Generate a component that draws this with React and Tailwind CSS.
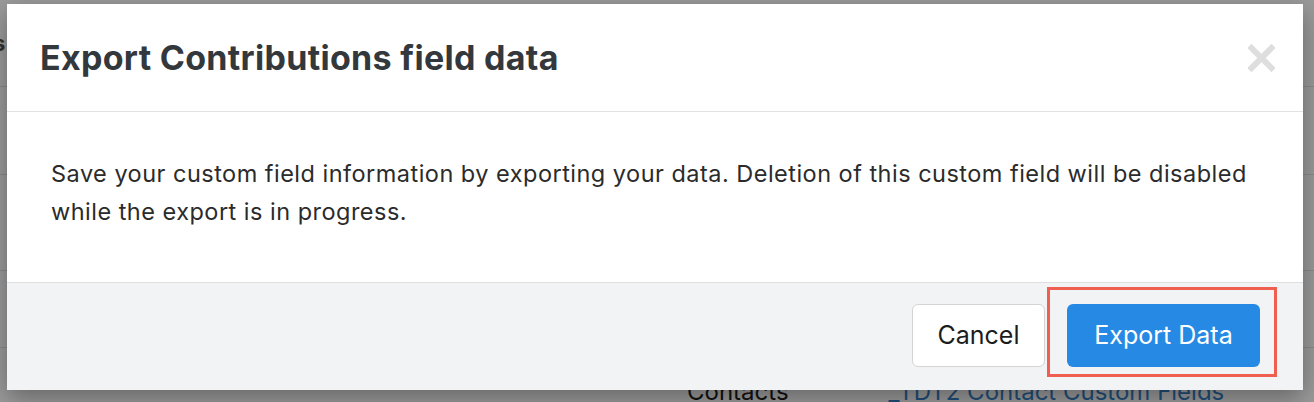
export default function App() {
  return (
    <div
      className="relative w-[1314px] h-[402px] overflow-hidden bg-[#9b9b9b]"
      style={{ fontFamily: 'Inter, "Noto Sans", sans-serif' }}
    >
      {/* page behind the overlay */}
      <div className="flex flex-col">
        <div className="h-[87px] border-b border-[#8a8a8a] flex items-center">
          <span className="ml-[-7px] text-[22px] font-bold text-[#333]">s</span>
        </div>
        <div className="h-[88px] border-b border-[#8a8a8a]" />
        <div className="h-[96px] border-b border-[#8a8a8a]" />
        <div className="h-[77px] border-b border-[#8a8a8a]" />
        <div className="flex items-start pt-[26px] pl-[687px] gap-[100px] text-[24px] whitespace-nowrap">
          <span className="text-[#111]">Contacts</span>
          <span className="text-[#1f4f7a]">_TDT2 Contact Custom Fields</span>
        </div>
      </div>

      {/* modal */}
      <div className="absolute left-[7px] top-[4px] w-[1296px] bg-white shadow-[0_8px_24px_rgba(0,0,0,0.35)]">
        <div className="flex items-center justify-between h-[108px] pl-[33px] pr-[28px] border-b border-[#e2e2e2]">
          <h2 className="text-[34px] font-bold text-[#33383d] tracking-[0.3px]">
            Export Contributions field data
          </h2>
          <svg width="27" height="28" viewBox="0 0 27 28">
            <path d="M3.5 4L23.5 24M23.5 4L3.5 24" stroke="#dedede" strokeWidth="6" strokeLinecap="square" />
          </svg>
        </div>

        <div className="h-[170px] pl-[44px] pr-[30px] pt-[43px]">
          <p className="text-[23.5px] leading-[38px] tracking-[0.48px] text-[#2b2b2b]">
            Save your custom field information by exporting your data. Deletion of this custom field will be disabled
            while the export is in progress.
          </p>
        </div>

        <div className="flex items-start justify-end h-[108px] bg-[#f2f3f5] border-t border-[#dedede] pt-[21px] pr-[26px] gap-[2px]">
          <button className="w-[133px] h-[63px] rounded-[6px] bg-white border border-[#d4d4d4] text-[25px] text-[#1c1c1c]">
            Cancel
          </button>
          <div className="mt-[-17px] border-[3px] border-[#ef5e4e] pl-[17px] pr-[14px] pt-[14px] pb-[7px]">
            <button className="block w-[193px] h-[63px] rounded-[6px] bg-[#268ae5] text-[25px] text-white">
              Export Data
            </button>
          </div>
        </div>
      </div>
    </div>
  );
}
